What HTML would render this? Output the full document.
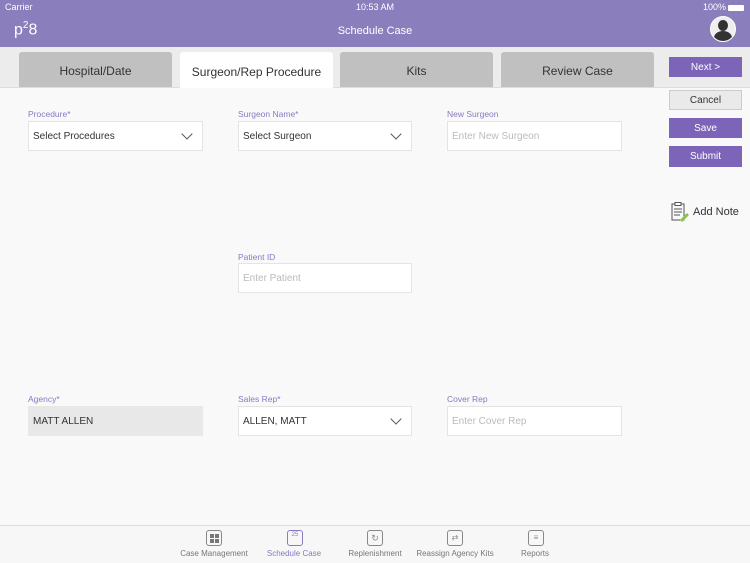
<!DOCTYPE html><html><head><style>
body{margin:0;width:750px;height:562px;overflow:hidden;background:#f9f9f9;font-family:"Liberation Sans",sans-serif;position:relative}
.a{position:absolute}
.hdr{left:0;top:0;width:750px;height:47px;background:#8b7ebd;color:#fff}
.tabs{left:0;top:47px;width:750px;height:40px;background:#ececec;border-bottom:1px solid #ddd}
.tab{top:52px;height:35px;width:153px;background:#c0c0c0;border-radius:3px 3px 0 0;display:flex;align-items:center;justify-content:center;padding-top:3px;box-sizing:border-box;font-size:12px;color:#333}
.btn{left:669px;width:73px;height:20px;background:#7c64b9;color:#fff;font-size:10px;display:flex;align-items:center;justify-content:center;box-sizing:border-box}
.lbl{font-size:8.5px;color:#8b78c4}
.fld{height:30px;background:#fff;border:1px solid #e4e4e4;box-sizing:border-box;font-size:10px;color:#333;display:flex;align-items:center;padding-left:4px}
.ph{color:#bbb}
.chev{position:absolute;right:11px;top:8px;width:7px;height:7px;border-right:1.5px solid #555;border-bottom:1.5px solid #555;transform:rotate(45deg)}
.bot{left:0;top:525px;width:750px;height:37px;background:#f7f7f7;border-top:1px solid #ddd}
.bi{top:530px;width:16px;height:16px;border:1px solid #888;border-radius:3px;box-sizing:border-box}
.bt{top:549px;font-size:8px;color:#777;text-align:center;width:90px}
</style></head><body>
<div class="a hdr"></div>
<div class="a" style="left:5px;top:2px;font-size:9px;color:#fff">Carrier</div>
<div class="a" style="left:356px;top:2px;font-size:9px;color:#fff">10:53 AM</div>
<div class="a" style="left:703px;top:2px;font-size:9px;color:#fff">100%</div>
<div class="a" style="left:728px;top:5px;width:16px;height:6px;background:#fff;border-radius:1px"></div>
<div class="a" style="left:14px;top:20px;font-size:16px;color:#fff">p<sup style="font-size:10px">2</sup>8</div>
<div class="a" style="left:0;top:25px;width:750px;text-align:center;font-size:11px;color:#fff">Schedule Case</div>
<div class="a" style="left:710px;top:16px;width:24px;height:24px;border-radius:50%;background:#eee;border:1px solid #fff;overflow:hidden"><div class="a" style="left:7px;top:3px;width:10px;height:11px;border-radius:50%;background:#333"></div><div class="a" style="left:3px;top:14px;width:18px;height:14px;border-radius:50% 50% 0 0;background:#333"></div></div>
<div class="a tabs"></div>
<div class="a tab" style="left:19px">Hospital/Date</div>
<div class="a tab" style="left:180px;background:#fff;height:36px">Surgeon/Rep Procedure</div>
<div class="a tab" style="left:340px">Kits</div>
<div class="a tab" style="left:501px">Review Case</div>
<div class="a btn" style="top:57px">Next &gt;</div>
<div class="a btn" style="top:90px;background:#eaeaea;color:#333;border:1px solid #ccc">Cancel</div>
<div class="a btn" style="top:118px">Save</div>
<div class="a btn" style="top:146px;height:21px">Submit</div>
<svg class="a" style="left:670px;top:202px" width="20" height="20"><rect x="2" y="2" width="12" height="16" fill="none" stroke="#555"/><rect x="5" y="0.5" width="6" height="3" fill="#fff" stroke="#555"/><path d="M4 7h8M4 10h8M4 13h6" stroke="#555"/><path d="M10 18l7-7 2 2-7 7z" fill="#8bc34a"/></svg>
<div class="a" style="left:693px;top:206px;font-size:11px;color:#333">Add Note</div>

<div class="a lbl" style="left:28px;top:109px">Procedure*</div>
<div class="a fld" style="left:28px;top:121px;width:175px">Select Procedures<span class="chev"></span></div>
<div class="a lbl" style="left:238px;top:109px">Surgeon Name*</div>
<div class="a fld" style="left:238px;top:121px;width:174px">Select Surgeon<span class="chev"></span></div>
<div class="a lbl" style="left:447px;top:109px">New Surgeon</div>
<div class="a fld ph" style="left:447px;top:121px;width:175px">Enter New Surgeon</div>
<div class="a lbl" style="left:238px;top:252px">Patient ID</div>
<div class="a fld ph" style="left:238px;top:263px;width:174px">Enter Patient</div>
<div class="a lbl" style="left:28px;top:394px">Agency*</div>
<div class="a fld" style="left:28px;top:406px;width:175px;background:#e8e8e8;border-color:#e8e8e8">MATT ALLEN</div>
<div class="a lbl" style="left:238px;top:394px">Sales Rep*</div>
<div class="a fld" style="left:238px;top:406px;width:174px">ALLEN, MATT<span class="chev"></span></div>
<div class="a lbl" style="left:447px;top:394px">Cover Rep</div>
<div class="a fld ph" style="left:447px;top:406px;width:175px">Enter Cover Rep</div>

<div class="a bot"></div>
<div class="a bi" style="left:206px"><div class="a" style="left:3px;top:3px;width:4px;height:4px;background:#777;box-shadow:5px 0 #777,0 5px #777,5px 5px #777"></div></div>
<div class="a bt" style="left:169px">Case Management</div>
<div class="a bi" style="left:287px;border-color:#8b78c4;font-size:6px;color:#8b78c4;text-align:center;line-height:9px">25</div>
<div class="a bt" style="left:249px;color:#8b78c4">Schedule Case</div>
<div class="a bi" style="left:367px;font-size:9px;color:#888;text-align:center;line-height:14px">↻</div>
<div class="a bt" style="left:330px">Replenishment</div>
<div class="a bi" style="left:447px;font-size:8px;color:#888;text-align:center;line-height:14px">⇄</div>
<div class="a bt" style="left:410px">Reassign Agency Kits</div>
<div class="a bi" style="left:528px;font-size:8px;color:#888;text-align:center;line-height:14px">≡</div>
<div class="a bt" style="left:490px">Reports</div>
</body></html>
